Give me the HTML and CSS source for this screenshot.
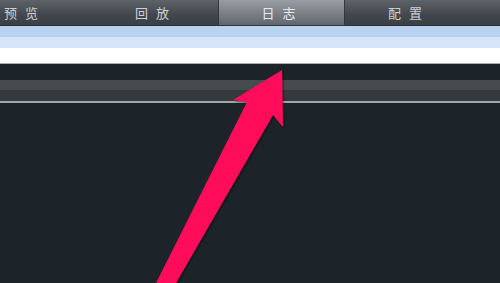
FILE: index.html
```html
<!DOCTYPE html>
<html lang="zh">
<head>
<meta charset="utf-8">
<link rel="stylesheet" href="styles.css">
</head>
<body>
<div class="page">
  <nav class="tabs">
    <div class="tab first">预览</div>
    <div class="tab">回放</div>
    <div class="tab active">日志</div>
    <div class="tab">配置</div>
    <div class="tab rest"></div>
  </nav>
  <div class="band blue1"></div>
  <div class="band blue2"></div>
  <div class="band white"></div>
  <div class="band dark"></div>
  <div class="band gray1"></div>
  <div class="band gray2"></div>
  <div class="band line"></div>
  <div class="content"></div>
  <svg class="arrow" width="500" height="283" viewBox="0 0 500 283">
    <defs>
      <filter id="sh" x="-20%" y="-20%" width="140%" height="140%">
        <feDropShadow dx="1" dy="1" stdDeviation="1.2" flood-color="#000" flood-opacity="0.6"/>
      </filter>
    </defs>
    <polygon filter="url(#sh)" fill="#ff0a5a" points="282,70 283,127 273,115 176,283 156,283 247,102 233,100"/>
  </svg>
</div>
</body>
</html>
```
FILE: styles.css
```css
html, body {
  margin: 0;
  padding: 0;
}
body {
  background: #1c2429;
  font-family: "Noto Sans CJK SC", "Noto Sans", sans-serif;
  overflow: hidden;
}
.page {
  position: relative;
  width: 500px;
  height: 283px;
  display: flex;
  flex-direction: column;
}
.tabs {
  display: flex;
  height: 26px;
  background: linear-gradient(#5e636a, #42464d 60%, #3a3e45);
  border-bottom: 1px solid #2e3238;
  box-sizing: border-box;
}
.tab {
  width: 126px;
  color: #cfd0d2;
  font-size: 13px;
  line-height: 25px;
  letter-spacing: 8px;
  text-indent: 2px;
  text-align: center;
  box-sizing: border-box;
}
.tab.first {
  width: 92px;
  text-align: left;
  text-indent: 4px;
}
.tab.active {
  width: 127px;
  background: linear-gradient(#9a9ea4, #7d8188 50%, #62666e);
  border-left: 1px solid #33373d;
  border-right: 1px solid #33373d;
  color: #e8e9eb;
}
.tab.rest {
  flex: 1;
}
.band { flex: none; }
.blue1 { height: 11px; background: #b8d3f1; }
.blue2 { height: 11px; background: #d6e6f8; }
.white { height: 15px; background: #ffffff; border-bottom: 1px solid #a9adb0; }
.dark { height: 16px; background: #1c2429; }
.gray1 { height: 10px; background: #474b4e; }
.gray2 { height: 11px; background: #36393c; }
.line { height: 2px; background: #a2a6a9; }
.content { flex: 1; background: #1c2429; }
.arrow {
  position: absolute;
  left: 0;
  top: 0;
}
```
